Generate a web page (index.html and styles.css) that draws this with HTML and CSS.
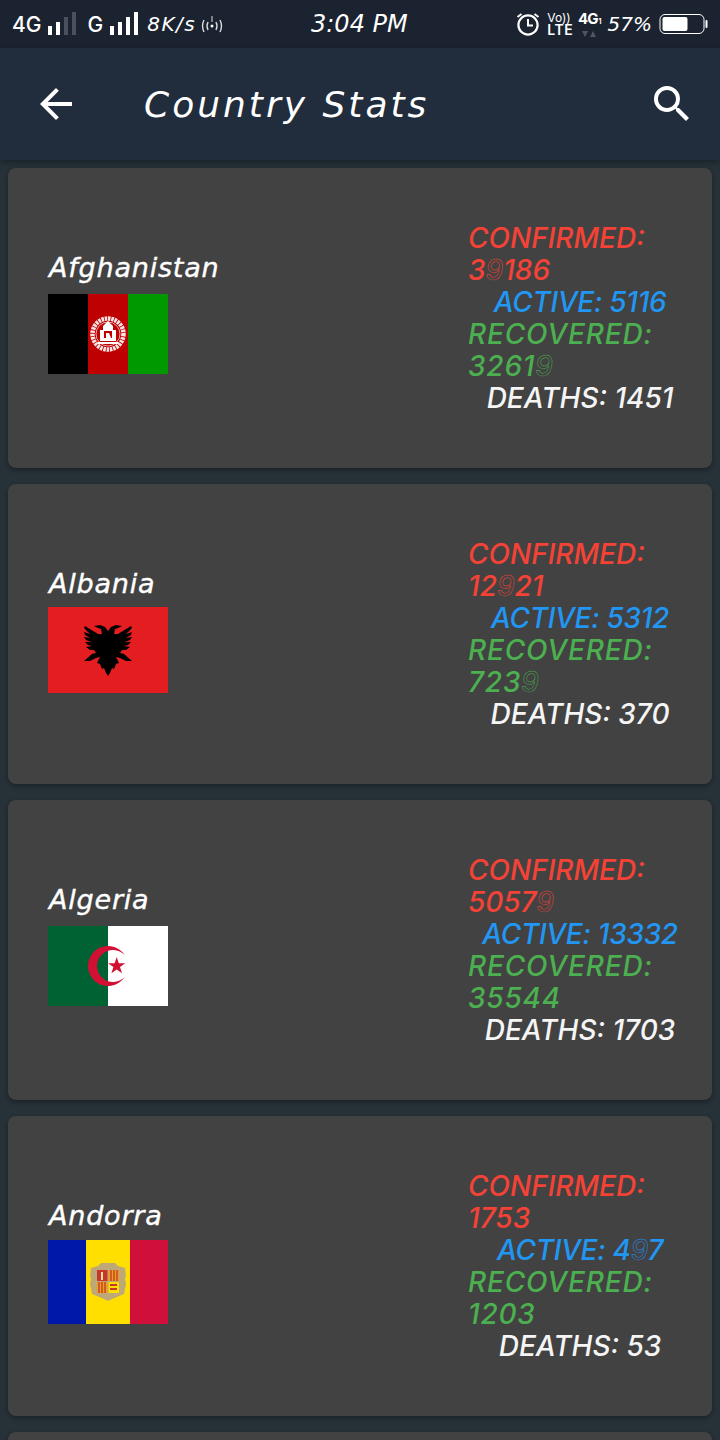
FILE: index.html
```html
<!DOCTYPE html>
<html lang="en">
<head>
<meta charset="utf-8">
<title>Country Stats</title>
<link rel="stylesheet" href="styles.css">
</head>
<body>
<div class="status">
  <div class="status-group">
    <span class="st-net">4G</span>
    <svg class="bars" width="30" height="26" viewBox="0 0 30 26"><rect x="0" y="15" width="4" height="9" fill="#fff"/><rect x="8" y="11" width="4" height="13" fill="#fff"/><rect x="16" y="6" width="4" height="18" fill="#4a505c"/><rect x="24" y="1" width="4" height="23" fill="#4a505c"/></svg>
    <span class="st-net st-g">G</span>
    <svg class="bars bars-g" width="30" height="26" viewBox="0 0 30 26"><rect x="0" y="15" width="4" height="9" fill="#fff"/><rect x="8" y="11" width="4" height="13" fill="#fff"/><rect x="16" y="6" width="4" height="18" fill="#fff"/><rect x="24" y="1" width="4" height="23" fill="#fff"/></svg>
    <span class="st-speed">8K/s</span>
    <svg class="hotspot" width="24" height="24" viewBox="0 0 24 24" fill="none" stroke="#ddd" stroke-width="1.400"><path d="M4 8q-3 6 0 12M20 8q3 6 0 12M8 10q-2 4 0 8M16 10q2 4 0 8"/><circle cx="12" cy="14" r="1.500" fill="#fff" stroke="none"/><path d="M12 4v6" stroke-width="1"/></svg>
  </div>
  <span class="st-time">3:04 PM</span>
  <div class="status-group">
    <svg class="alarm" width="24" height="24" viewBox="0 0 24 24" fill="none" stroke="#fff" stroke-width="2.200"><circle cx="12" cy="13" r="9.600"/><path d="M12 7v6.500h5" stroke-width="2"/><path d="M1.500 5 5.500 2M22.500 5 18.500 2" stroke-width="1.800"/></svg>
    <div class="volte"><span class="vo">Vo))</span><span class="lte">LTE</span></div>
    <div class="net4g"><span class="n4">4G<small>1</small></span><svg width="16" height="8" viewBox="0 0 16 8"><path d="M1 1h6L4 7zM9 7h6l-3-6z" fill="#50555f"/></svg></div>
    <span class="st-batt">57%</span>
    <svg class="battery" width="50" height="22" viewBox="0 0 50 22"><rect x="1" y="1.500" width="44" height="19" rx="5" fill="none" stroke="#fff" stroke-width="1"/><rect x="3.500" y="4" width="25" height="14" rx="2" fill="#fff"/><rect x="46.500" y="7" width="2" height="8" rx="1" fill="#fff"/></svg>
  </div>
</div>

<header class="appbar">
  <svg class="icon" viewBox="0 0 24 24"><path fill="#fff" d="M20 11H7.830l5.590-5.590L12 4l-8 8 8 8 1.410-1.410L7.830 13H20v-2z"/></svg>
  <h1 class="title">Country Stats</h1>
  <svg class="icon" viewBox="0 0 24 24"><path fill="#fff" d="M15.500 14h-.79l-.28-.27A6.470 6.470 0 0 0 16 9.500 6.500 6.500 0 1 0 9.500 16c1.610 0 3.090-.59 4.230-1.570l.27.28v.79l5 4.990L20.490 19l-4.990-5zm-6 0C7.010 14 5 11.990 5 9.500S7.010 5 9.500 5 14 7.010 14 9.500 11.990 14 9.500 14z"/></svg>
</header>

<main class="list">
  <article class="card">
    <div class="country">
      <div class="name">Afghanistan</div>
      <div class="flag-box">
        <svg width="120" height="80" viewBox="0 0 120 80">
          <rect width="40" height="80" fill="#000"/><rect x="40" width="40" height="80" fill="#bf0000"/><rect x="80" width="40" height="80" fill="#009900"/>
          <circle cx="60" cy="40" r="15.500" fill="none" stroke="#f6e4e4" stroke-width="4.500" stroke-dasharray="2.500 .8"/>
          <circle cx="60" cy="40" r="12" fill="none" stroke="#e8a8a8" stroke-width="1"/>
          <path fill="#fff" d="M52 47v-11h3v-4l5-5 5 5v4h3v11z"/>
          <path fill="#bf0000" d="M56 37h8v7h-8z"/><path fill="#fff" d="M58 39h3l2 5h-5zM50 48h20v2H50z"/>
        </svg>
      </div>
    </div>
    <div class="stats">
      <div class="stat confirmed">CONFIRMED: 3<span class="thin">9</span>186</div>
      <div class="stat active">ACTIVE: 5116</div>
      <div class="stat recovered">RECOVERED: 3261<span class="thin">9</span></div>
      <div class="stat deaths">DEATHS: 1451</div>
    </div>
  </article>

  <article class="card">
    <div class="country">
      <div class="name">Albania</div>
      <div class="flag-box">
        <svg width="120" height="86" viewBox="0 0 120 86">
          <rect width="120" height="86" fill="#e41e20"/>
          <path id="eagle-half" fill="#000" d="M60 24l3-4 5-2 6 1-4 2-3 1-1 5 4 0 13-8 1 2-6 6 6-2-1 3-5 3 6-1-2 3-5 2 6 0-3 3-4 1 6 1-4 3-4 0-2 3 4 1 8 7-6 0-6-3-4-1 3 6-3 1-2 5-2-1-2 5-2 3z"/>
          <use href="#eagle-half" transform="translate(120 0) scale(-1 1)"/>
        </svg>
      </div>
    </div>
    <div class="stats">
      <div class="stat confirmed">CONFIRMED: 12<span class="thin">9</span>21</div>
      <div class="stat active">ACTIVE: 5312</div>
      <div class="stat recovered">RECOVERED: 723<span class="thin">9</span></div>
      <div class="stat deaths">DEATHS: 370</div>
    </div>
  </article>

  <article class="card">
    <div class="country">
      <div class="name">Algeria</div>
      <div class="flag-box">
        <svg width="120" height="80" viewBox="0 0 120 80">
          <rect width="60" height="80" fill="#006233"/><rect x="60" width="60" height="80" fill="#fff"/>
          <path fill="#d21034" d="M76.900 29.300A20 20 0 1 0 76.900 50.700A16 16 0 1 1 76.900 29.300z"/>
          <path fill="#d21034" d="M68.700 31l2.100 6.200 6.500 0-5.300 3.900 2 6.200-5.300-3.800-5.300 3.800 2-6.200-5.300-3.900 6.500 0z"/>
        </svg>
      </div>
    </div>
    <div class="stats">
      <div class="stat confirmed">CONFIRMED: 5057<span class="thin">9</span></div>
      <div class="stat active">ACTIVE: 13332</div>
      <div class="stat recovered">RECOVERED: 35544</div>
      <div class="stat deaths">DEATHS: 1703</div>
    </div>
  </article>

  <article class="card">
    <div class="country">
      <div class="name">Andorra</div>
      <div class="flag-box">
        <svg width="120" height="84" viewBox="0 0 120 84">
          <rect width="38" height="84" fill="#0018a8"/><rect x="38" width="44" height="84" fill="#fedf00"/><rect x="82" width="38" height="84" fill="#d0103a"/>
          <path fill="#bfa878" d="M43 28l7-2 3-3h14l3 3 7 2 1 8-1 2 1 6-2 10-7 3-5 2-4 2-4-2-5-2-7-3-2-10 1-6-1-2z"/>
          <rect x="49" y="30" width="10.500" height="11" fill="#c8352a"/><rect x="60.500" y="30" width="10.500" height="11" fill="#e8a020"/>
          <rect x="49" y="42" width="10.500" height="11" fill="#e8a020"/><rect x="60.500" y="42" width="10.500" height="11" fill="#fedf00"/>
          <path stroke="#c8352a" stroke-width="1.300" d="M63 30v11M66 30v11M69 30v11M51 42v11M54 42v11M57 42v11"/>
          <path fill="#f4e0a0" d="M53 32h2v8h-2z"/><path fill="#c8352a" d="M62 44h7v2h-7zM62 48h7v2h-7z"/>
        </svg>
      </div>
    </div>
    <div class="stats">
      <div class="stat confirmed">CONFIRMED: 1753</div>
      <div class="stat active">ACTIVE: 4<span class="thin">9</span>7</div>
      <div class="stat recovered">RECOVERED: 1203</div>
      <div class="stat deaths">DEATHS: 53</div>
    </div>
  </article>

  <article class="card"></article>
</main>
</body>
</html>
```
FILE: styles.css
```css
* { box-sizing: border-box; }
html, body { margin: 0; padding: 0; height: 1440px; overflow: hidden; background: #263238; }
body { font-family: "Inter", "Liberation Sans", sans-serif; color: #fff; }

.status { height: 48px; background: #1b2330; display: flex; align-items: center; justify-content: space-between; padding: 0 12px; position: relative; }
.status-group { display: flex; align-items: center; }
.st-net { font-size: 21px; font-weight: 500; }
.bars { margin-left: 7px; }
.bars-g { margin-left: 7px; }
.st-g { margin-left: 9px; }
.st-speed { font-family: "DejaVu Sans", sans-serif; font-style: oblique; font-size: 20px; letter-spacing: 1.500px; margin-left: 7px; }
.hotspot { margin-left: 4px; }
.st-time { font-family: "DejaVu Sans", sans-serif; font-style: oblique; font-size: 24px; line-height: 28px; position: absolute; left: 311px; top: 10px; }
.alarm { margin-right: 7px; }
.volte { display: flex; flex-direction: column; line-height: 12px; margin-right: 5px; }
.vo { font-size: 12px; }
.lte { font-size: 14px; font-weight: 600; letter-spacing: .5px; }
.net4g { display: flex; flex-direction: column; align-items: center; line-height: 16px; margin-right: 7px; }
.n4 { font-size: 15px; font-weight: 700; letter-spacing: -1px; }
.n4 small { font-size: 7px; margin-left: 1px; }
.st-batt { font-family: "DejaVu Sans", sans-serif; font-style: oblique; font-size: 20px; margin-right: 7px; }
.battery { margin-right: -1px; }

.appbar { height: 112px; background: #212d3d; display: flex; align-items: center; padding: 0 24px 0 32px; box-shadow: 0 3px 6px rgba(0,0,0,.3); position: relative; z-index: 1; }
.icon { width: 48px; height: 48px; flex: none; }
.title { flex: 1; margin: 0 0 0 64px; font-family: "DejaVu Sans", sans-serif; font-style: oblique; font-weight: 400; font-size: 36px; letter-spacing: 3px; }

.list { height: 1280px; overflow: hidden; padding: 8px 8px 0; display: flex; flex-direction: column; gap: 16px; }
.card { flex: none; height: 300px; background: #424242; border-radius: 8px; box-shadow: 0 2px 4px rgba(0,0,0,.35); display: flex; padding: 0 20px 0 40px; justify-content: space-between; }
.country { padding-top: 84px; width: 240px; }
.name { font-family: "DejaVu Sans", sans-serif; font-style: oblique; font-size: 27px; line-height: 32px; letter-spacing: .8px; padding-left: 1px; -webkit-text-stroke: .4px #fff; }
.flag-box { height: 100px; margin-left: 0; display: flex; align-items: center; }
.flag-box svg { display: block; }

.stats { width: 224px; align-self: center; display: flex; flex-direction: column; font-family: "Inter", sans-serif; font-style: italic; font-weight: 500; font-size: 28px; line-height: 32px; }
.stat { width: 100%; }
.active, .deaths { text-align: center; }
.confirmed { color: #f44336; }
.active { color: #2196f3; letter-spacing: -.3px; }
.recovered { color: #4caf50; letter-spacing: .8px; }
.deaths { color: #f5f5f5; }
.thin { -webkit-text-fill-color: transparent; -webkit-text-stroke: .5px currentColor; }
```
